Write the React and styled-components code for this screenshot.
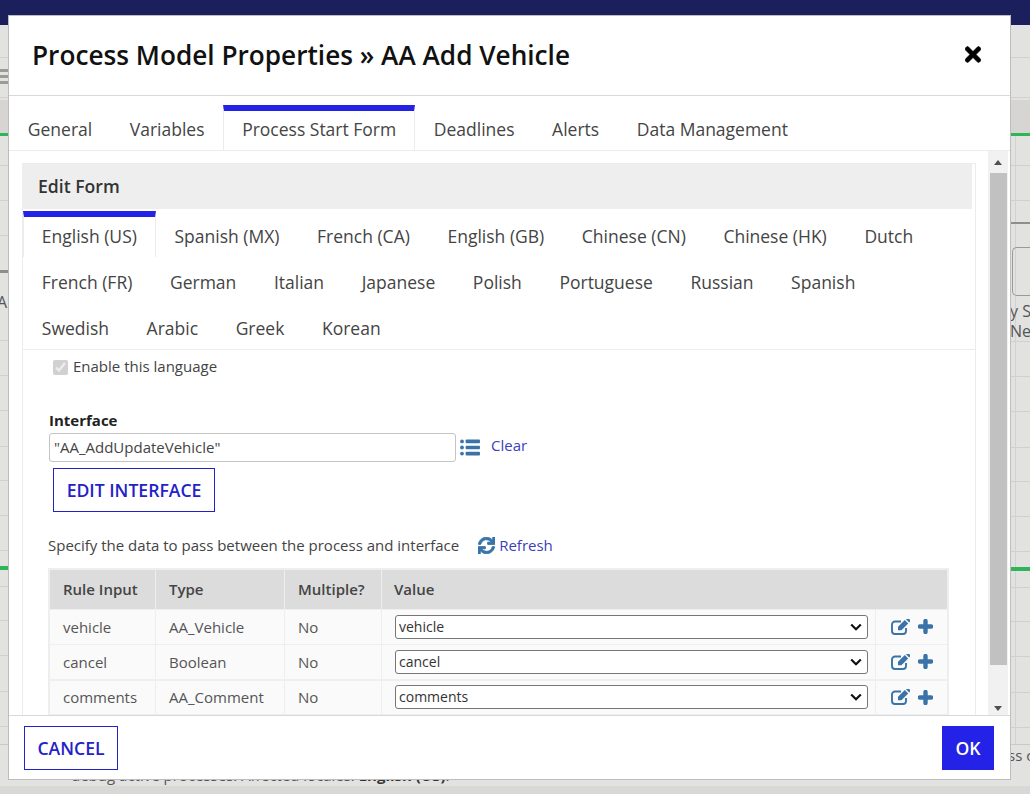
import React from "react";
import styled, { createGlobalStyle } from "styled-components";
import { FaSync, FaTimes } from "react-icons/fa";

const Global = createGlobalStyle`
  html, body { margin: 0; padding: 0; height: 100%; overflow: hidden; }
  body { font-family: "Open Sans", "Liberation Sans", sans-serif; color: #333; background: #e2e2e0; }
  * { box-sizing: border-box; }
`;

const Page = styled.div`
  position: relative;
  width: 1030px;
  height: 794px;
  overflow: hidden;
`;

/* dimmed page behind the dialog */
const Backdrop = styled.div`
  display: flex;
  flex-direction: column;
  height: 100%;
  background: #e2e2e0;
  color: #555;
`;
const TopBar = styled.div`
  flex: none;
  height: 25px;
  background: #1b1f5c;
`;
const Sides = styled.div`
  flex: none;
  height: 720px;
  display: flex;
  justify-content: space-between;
  border-bottom: 1px solid #c9c9c7;
`;
const Side = styled.div`
  flex: none;
  width: ${(p) => p.$w}px;
  display: flex;
  flex-direction: column;
  overflow: hidden;
`;
const Strip = styled.div`
  flex: none;
  height: ${(p) => p.$h}px;
  background: ${(p) => p.$bg || "transparent"};
  border-bottom: ${(p) => (p.$line ? "1px solid #d0d0ce" : "none")};
`;
const MenuStrip = styled.div`
  flex: none;
  height: 40px;
  padding-top: 11px;
  display: flex;
  flex-direction: column;
  gap: 3px;
  border-bottom: 1px solid #d0d0ce;
`;
const MenuBar = styled.div`
  flex: none;
  height: 3px;
  background: #9a9a98;
`;
const Ruled = styled.div`
  flex: 1;
  display: flex;
  flex-direction: column;
  background: ${(p) => (p.$rule ? "linear-gradient(#d2d2d0, #d2d2d0) 5px 0 / 1px 100% no-repeat" : "none")};
`;
const LeftFragment = styled.div`
  flex: none;
  height: 68px;
  margin-left: -3px;
  padding-top: 19px;
  font-size: 16px;
  line-height: 20px;
  border-bottom: 1px solid #d0d0ce;
`;
const GhostSlot = styled.div`
  flex: none;
  height: 118px;
  padding: 23px 0 0 2px;
  font-size: 16px;
  line-height: 20px;
  white-space: nowrap;
  border-bottom: 1px solid #d0d0ce;
`;
const GhostButton = styled.div`
  height: 49px;
  margin-bottom: 5px;
  border: 1px solid #9a9a98;
  border-right: none;
  border-radius: 5px 0 0 5px;
`;
const GhostText = styled.div`
  margin-left: -2px;
`;
const Bottom = styled.div`
  flex: none;
  height: 41px;
  font-size: 15px;
  line-height: 20px;
  white-space: nowrap;
  overflow: hidden;
  strong { font-weight: 700; color: #333; }
`;
const BottomEnd = styled.div`
  width: 22px;
  margin-left: auto;
  overflow: hidden;
`;
const BottomLine = styled.div`
  padding-left: 71px;
`;
const BottomBand = styled.div`
  flex: 1;
  background: #d8d8d6;
`;

/* dialog */
const Modal = styled.div`
  position: absolute;
  left: 8px;
  top: 15px;
  width: 1003px;
  height: 765px;
  background: #fff;
  border: 1px solid #bdbdbd;
  display: flex;
  flex-direction: column;
`;
const Header = styled.header`
  flex: none;
  height: 80px;
  padding: 0 29px 2px 23px;
  display: flex;
  align-items: center;
  justify-content: space-between;
  border-bottom: 1px solid #d9d9d9;
`;
const Title = styled.h1`
  margin: 0;
  font-size: 26.2px;
  font-weight: 600;
  color: #111;
`;
const CloseIcon = styled(FaTimes)`
  width: 16px;
  height: 23px;
  color: #000;
  stroke: #000;
  stroke-width: 16;
`;
const TabRow = styled.div`
  display: flex;
  flex-wrap: wrap;
  align-items: stretch;
`;
const MainTabs = styled(TabRow)`
  flex: none;
  height: 55px;
  padding-top: 9px;
  border-bottom: 1px solid #ececec;
`;
const LangTabs = styled(TabRow)`
  padding-top: 2px;
  height: 141px;
  align-content: flex-start;
  border-bottom: 1px solid #ececec;
`;
const Tab = styled.div`
  flex: none;
  height: 46px;
  padding: 0 17.8px ${(p) => p.$pb}px;
  display: flex;
  align-items: center;
  font-size: 17.5px;
  color: #444;
  border-top: 6px solid ${(p) => (p.$active ? "#2322e6" : "transparent")};
  border-left: 1px solid ${(p) => (p.$active ? "#ececec" : "transparent")};
  border-right: 1px solid ${(p) => (p.$active ? "#ececec" : "transparent")};
`;
const Body = styled.div`
  flex: 1;
  min-height: 0;
  display: flex;
`;
const Content = styled.div`
  flex: 1;
  min-width: 0;
  overflow: hidden;
  padding: 12px 12px 0 13px;
`;
const Panel = styled.section`
  height: 100%;
  border-left: 1px solid #ececec;
  border-right: 1px solid #ececec;
  border-top: 1px solid #ececec;
`;
const PanelTitle = styled.h2`
  margin: 0 3px 0 -1px;
  height: 45px;
  padding: 0 16px 2px;
  display: flex;
  align-items: center;
  font-size: 17.6px;
  font-weight: 600;
  color: #333;
  background: #eee;
`;
const Form = styled.div`
  padding: 6px 0 0 25px;
`;
const CheckRow = styled.label`
  display: flex;
  align-items: center;
  gap: 5px;
  margin-left: 5px;
  height: 20px;
  font-size: 15px;
  color: #444;
`;
const Check = styled.input`
  width: 15px;
  height: 15px;
  margin: 2px 0 0;
`;
const FieldLabel = styled.div`
  margin: 34px 0 0 1px;
  font-size: 15px;
  line-height: 20px;
  font-weight: 700;
  color: #222;
`;
const PickerRow = styled.div`
  display: flex;
  align-items: center;
  margin: 3px 0 0 1px;
`;
const TextInput = styled.input`
  width: 407px;
  height: 29px;
  padding: 0 4px 2px;
  font: 15px "Open Sans", sans-serif;
  color: #444;
  border: 1px solid #c4c4c4;
  border-radius: 3px;
  outline: none;
`;
const IconSvg = styled.svg`
  display: block;
  flex: none;
  color: #3a73a8;
`;
const ListSvg = styled(IconSvg)`
  margin: 0 11px 0 4px;
`;
const SyncIcon = styled(FaSync)`
  width: 17px;
  height: 17px;
  display: block;
  color: #3a73a8;
  stroke: #3a73a8;
  stroke-width: 26;
`;
const TextLink = styled.a`
  font-size: 15px;
  color: #3d3fb8;
  margin-top: -5px;
`;
const OutlineButton = styled.button`
  font: 600 17.6px "Open Sans", sans-serif;
  color: #2322c8;
  background: #fff;
  border: 1px solid #2322c8;
  height: 44px;
  padding: 0 0 1px;
  border-radius: 0;
`;
const EditButton = styled(OutlineButton)`
  display: block;
  margin: 6px 0 0 5px;
  width: 162px;
`;
const CancelButton = styled(OutlineButton)`
  width: 94px;
`;
const OkButton = styled.button`
  width: 52px;
  height: 44px;
  padding: 0 0 1px;
  font: 600 17.6px "Open Sans", sans-serif;
  color: #fff;
  background: #2322e6;
  border: none;
  border-radius: 0;
`;
const SpecifyRow = styled.div`
  display: flex;
  align-items: center;
  margin: 23px 0 0;
  height: 20px;
  font-size: 15px;
  color: #444;
`;
const RefreshLink = styled(TextLink)`
  display: inline-flex;
  align-items: center;
  gap: 4px;
  margin: 0 0 0 19px;
`;
const Table = styled.table`
  margin: 13px 0 0 0;
  width: 901px;
  border-collapse: separate;
  border-spacing: 0;
  table-layout: fixed;
  border: 2px solid #eee;
  font-size: 15px;
`;
const Th = styled.th`
  height: 39px;
  padding: 0 13px 1px;
  text-align: left;
  font-weight: 600;
  color: #444;
  background: #dcdcdc;
  border-right: 1px solid #eee;
  &:last-child { border-right: none; }
`;
const ValueTh = styled(Th)`
  padding-left: 12px;
`;
const Td = styled.td`
  height: ${(p) => p.$h}px;
  padding: 0 13px 1px;
  color: #555;
  background: #fafafa;
  border-top: ${(p) => p.$top}px solid #efefef;
  border-right: 1px solid #eee;
  &:last-child { border-right: none; }
`;
const ValueCell = styled(Td)`
  padding: 0 7px 1px 13px;
`;
const ActionCell = styled(Td)`
  padding: 0 0 1px 15px;
`;
const CHEVRON = encodeURIComponent(
  '<svg xmlns="http://www.w3.org/2000/svg" width="12" height="8" viewBox="0 0 12 8"><path d="M1.2 1.5 6 6.2l4.8-4.7" fill="none" stroke="#111" stroke-width="2.2"/></svg>'
);
const Select = styled.select`
  display: block;
  width: 100%;
  height: 24px;
  padding: 0 20px 1px 3px;
  font: 14px "Open Sans", sans-serif;
  color: #333;
  appearance: none;
  background: #fff url("data:image/svg+xml,${CHEVRON}") no-repeat right 5px center;
  border: 1px solid #767676;
  border-radius: 3px;
`;
const Actions = styled.div`
  display: flex;
  align-items: center;
  gap: 8px;
`;
const Scrollbar = styled.div`
  flex: none;
  width: 20px;
  margin-right: 2px;
  background: #f1f1f1;
  display: flex;
  flex-direction: column;
  align-items: stretch;
`;
const ArrowBox = styled.div`
  flex: none;
  height: ${(p) => p.$h}px;
  display: flex;
  align-items: center;
  justify-content: center;
`;
const Arrow = styled.div`
  width: 0;
  height: 0;
  border-left: 4.5px solid transparent;
  border-right: 4.5px solid transparent;
  ${(p) => (p.$down ? "border-top: 5px solid #505050;" : "border-bottom: 5px solid #505050;")}
`;
const Thumb = styled.div`
  flex: none;
  height: 492px;
  margin: 0 1px 0 2px;
  background: #c1c1c1;
`;
const TrackFill = styled.div`
  flex: 1;
`;
const Footer = styled.footer`
  flex: none;
  height: 64px;
  padding: 10px 16px 0 15px;
  display: flex;
  align-items: flex-start;
  justify-content: space-between;
  border-top: 1px solid #d9d9d9;
`;

const ListIcon = () => (
  <ListSvg width="20" height="17" viewBox="0 0 20 17" fill="currentColor">
    <circle cx="2" cy="2.4" r="1.9" />
    <circle cx="2" cy="8.5" r="1.9" />
    <circle cx="2" cy="14.6" r="1.9" />
    <rect x="5.6" y="0.6" width="14.4" height="3.6" rx="1" />
    <rect x="5.6" y="6.7" width="14.4" height="3.6" rx="1" />
    <rect x="5.6" y="12.8" width="14.4" height="3.6" rx="1" />
  </ListSvg>
);
const EditIcon = () => (
  <IconSvg width="19" height="16" viewBox="0 0 19 16" fill="currentColor">
    <path d="M10 2.5H4a3 3 0 0 0-3 3v6.5a3 3 0 0 0 3 3h8a3 3 0 0 0 3-3V9" fill="none" stroke="currentColor" strokeWidth="1.9" />
    <path d="M7 7.8 13.8 1l3.4 3.4L10.4 11.2H7z" />
    <path d="M14.8 0l3.4 3.4L19 2.6a1.6 1.6 0 0 0 0-1.8L18.2 0a1.6 1.6 0 0 0-1.9 0z" />
  </IconSvg>
);
const PlusIcon = () => (
  <IconSvg width="15" height="15" viewBox="0 0 15 15">
    <path d="M7.5 2v11M2 7.5h11" fill="none" stroke="currentColor" strokeWidth="4.4" strokeLinecap="round" />
  </IconSvg>
);

const MAIN_TABS = ["General", "Variables", "Process Start Form", "Deadlines", "Alerts", "Data Management"];
const LANGS = [
  "English (US)", "Spanish (MX)", "French (CA)", "English (GB)", "Chinese (CN)", "Chinese (HK)", "Dutch",
  "French (FR)", "German", "Italian", "Japanese", "Polish", "Portuguese", "Russian", "Spanish",
  "Swedish", "Arabic", "Greek", "Korean",
];
const ROWS = [
  { name: "vehicle", type: "AA_Vehicle", h: 35, top: 1 },
  { name: "cancel", type: "Boolean", h: 35, top: 1 },
  { name: "comments", type: "AA_Comment", h: 35, top: 2 },
];

const LowerRows = () => (
  <>
    <Strip $h={35} $line />
    <Strip $h={36} $line />
    <Strip $h={34} $line />
    <Strip $h={35} $line />
    <Strip $h={35} $line />
    <Strip $h={15} />
    <Strip $h={4} $bg="#2fb457" />
    <Strip $h={17} $line />
    <Strip $h={34} $line />
    <Strip $h={35} $line />
    <Strip $h={36} $line />
    <Strip $h={35} $line />
  </>
);

export default function App() {
  return (
    <Page>
      <Global />
      <Backdrop>
        <TopBar />
        <Sides>
          <Side $w={9}>
            <Strip $h={33} $line />
            <MenuStrip><MenuBar /><MenuBar /><MenuBar /></MenuStrip>
            <Strip $h={2} />
            <Strip $h={33} $bg="#d6d5d3" />
            <Strip $h={3} $bg="#2fb457" />
            <Strip $h={30} $line />
            <Strip $h={35} $line />
            <Strip $h={35} $line />
            <Strip $h={34} />
            <Strip $h={3} $bg="#8e8e8c" />
            <LeftFragment>A</LeftFragment>
            <Strip $h={35} $line />
            <LowerRows />
          </Side>
          <Side $w={20}>
            <Strip $h={33} $line />
            <Strip $h={40} $line />
            <Strip $h={2} />
            <Strip $h={33} $bg="#d6d5d3" />
            <Strip $h={3} $bg="#2fb457" />
            <Ruled $rule>
              <Strip $h={30} $line />
              <Strip $h={35} $line />
              <Strip $h={21} />
              <Strip $h={2} $bg="#8e8e8c" />
              <GhostSlot>
                <GhostButton />
                <GhostText>y S</GhostText>
                <GhostText>New</GhostText>
              </GhostSlot>
              <Strip $h={35} $line />
              <LowerRows />
            </Ruled>
          </Side>
        </Sides>
        <Bottom>
          <BottomEnd>ss c</BottomEnd>
          <BottomLine>debug active processes. Affected locales: <strong>English (US)</strong>.</BottomLine>
        </Bottom>
        <BottomBand />
      </Backdrop>

      <Modal>
        <Header>
          <Title>Process Model Properties » AA Add Vehicle</Title>
          <CloseIcon />
        </Header>
        <MainTabs>
          {MAIN_TABS.map((t) => (
            <Tab key={t} $pb={4} $active={t === "Process Start Form"}>{t}</Tab>
          ))}
        </MainTabs>
        <Body>
          <Content>
            <Panel>
              <PanelTitle>Edit Form</PanelTitle>
              <LangTabs>
                {LANGS.map((l) => (
                  <Tab key={l} $pb={2} $active={l === "English (US)"}>{l}</Tab>
                ))}
              </LangTabs>
              <Form>
                <CheckRow>
                  <Check type="checkbox" checked disabled readOnly />
                  Enable this language
                </CheckRow>
                <FieldLabel>Interface</FieldLabel>
                <PickerRow>
                  <TextInput readOnly value={'"AA_AddUpdateVehicle"'} />
                  <ListIcon />
                  <TextLink>Clear</TextLink>
                </PickerRow>
                <EditButton>EDIT INTERFACE</EditButton>
                <SpecifyRow>
                  Specify the data to pass between the process and interface
                  <RefreshLink>
                    <SyncIcon />
                    Refresh
                  </RefreshLink>
                </SpecifyRow>
                <Table>
                  <colgroup>
                    <col style={{ width: 106 }} />
                    <col style={{ width: 129 }} />
                    <col style={{ width: 97 }} />
                    <col style={{ width: 494 }} />
                    <col />
                  </colgroup>
                  <thead>
                    <tr>
                      <Th>Rule Input</Th>
                      <Th>Type</Th>
                      <Th>Multiple?</Th>
                      <ValueTh colSpan={2}>Value</ValueTh>
                    </tr>
                  </thead>
                  <tbody>
                    {ROWS.map((r) => (
                      <tr key={r.name}>
                        <Td $h={r.h} $top={r.top}>{r.name}</Td>
                        <Td $h={r.h} $top={r.top}>{r.type}</Td>
                        <Td $h={r.h} $top={r.top}>No</Td>
                        <ValueCell $h={r.h} $top={r.top}>
                          <Select defaultValue={r.name}>
                            <option value={r.name}>{r.name}</option>
                          </Select>
                        </ValueCell>
                        <ActionCell $h={r.h} $top={r.top}>
                          <Actions>
                            <EditIcon />
                            <PlusIcon />
                          </Actions>
                        </ActionCell>
                      </tr>
                    ))}
                  </tbody>
                </Table>
              </Form>
            </Panel>
          </Content>
          <Scrollbar>
            <ArrowBox $h={22}><Arrow /></ArrowBox>
            <Thumb />
            <TrackFill />
            <ArrowBox $h={14}><Arrow $down /></ArrowBox>
          </Scrollbar>
        </Body>
        <Footer>
          <CancelButton>CANCEL</CancelButton>
          <OkButton>OK</OkButton>
        </Footer>
      </Modal>
    </Page>
  );
}
